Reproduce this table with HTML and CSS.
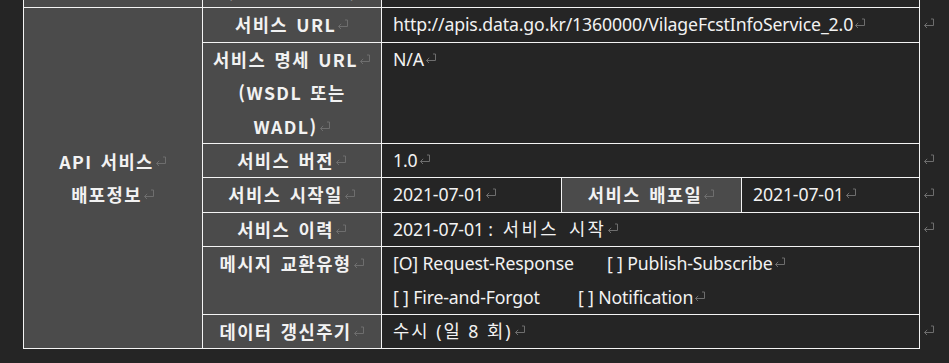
FILE: index.html
```html
<!DOCTYPE html>
<html lang="ko">
<head>
  <meta charset="UTF-8" />
  <meta name="viewport" content="width=device-width, initial-scale=1.0" />
  <title>API 서비스 배포정보</title>
  <link rel="stylesheet" href="styles.css">
</head>
<body>

  <!-- paragraph mark, reused after every paragraph -->
  <svg width="0" height="0" class="defs" aria-hidden="true">
    <symbol id="pm" viewBox="0 0 12 10">
      <path d="M8 1H10.5V7.5H1.5M4.2 4.8L1.5 7.5L4.2 10.2" fill="none" stroke="currentColor" stroke-width="1"/>
    </symbol>
  </svg>

  <!-- Document view, scrolled so the previous row is just cut off at the top -->
  <div class="sheet">
    <table class="spec">
      <colgroup>
        <col class="c-group">
        <col class="c-label">
        <col class="c-data">
        <col class="c-data">
        <col class="c-data-end">
        <col class="c-mark">
      </colgroup>

      <tr>
        <td class="label"></td>
        <td class="label">(동네예보 조회)</td>
        <td class="data" colspan="3"></td>
        <td class="mark-cell"></td>
      </tr>

      <tr>
        <td class="group" rowspan="7">API 서비스<svg class="pm"><use href="#pm"/></svg><br>배포정보<svg class="pm"><use href="#pm"/></svg></td>
        <td class="label">서비스 URL<svg class="pm"><use href="#pm"/></svg></td>
        <td class="data" colspan="3">http://apis.data.go.kr/1360000/VilageFcstInfoService_2.0<svg class="pm"><use href="#pm"/></svg></td>
        <td class="mark-cell"><svg class="pm"><use href="#pm"/></svg></td>
      </tr>

      <tr>
        <td class="label">서비스 명세 URL<svg class="pm"><use href="#pm"/></svg><br>(WSDL 또는<br>WADL)<svg class="pm"><use href="#pm"/></svg></td>
        <td class="data" colspan="3">N/A<svg class="pm"><use href="#pm"/></svg></td>
        <td class="mark-cell"></td>
      </tr>

      <tr>
        <td class="label">서비스 버전<svg class="pm"><use href="#pm"/></svg></td>
        <td class="data" colspan="3">1.0<svg class="pm"><use href="#pm"/></svg></td>
        <td class="mark-cell"><svg class="pm"><use href="#pm"/></svg></td>
      </tr>

      <tr>
        <td class="label">서비스 시작일<svg class="pm"><use href="#pm"/></svg></td>
        <td class="data">2021-07-01<svg class="pm"><use href="#pm"/></svg></td>
        <td class="label">서비스 배포일<svg class="pm"><use href="#pm"/></svg></td>
        <td class="data">2021-07-01<svg class="pm"><use href="#pm"/></svg></td>
        <td class="mark-cell"><svg class="pm"><use href="#pm"/></svg></td>
      </tr>

      <tr>
        <td class="label">서비스 이력<svg class="pm"><use href="#pm"/></svg></td>
        <td class="data" colspan="3">2021-07-01&nbsp;:<span class="ko wide"> 서비스 시작</span><svg class="pm"><use href="#pm"/></svg></td>
        <td class="mark-cell"><svg class="pm"><use href="#pm"/></svg></td>
      </tr>

      <tr>
        <td class="label">메시지 교환유형<svg class="pm"><use href="#pm"/></svg></td>
        <td class="data" colspan="3">
          <span class="opt opt-1">[O] Request-Response</span>[ ] Publish-Subscribe<svg class="pm"><use href="#pm"/></svg><br>
          <span class="opt opt-2">[ ] Fire-and-Forgot</span>[ ] Notification<svg class="pm"><use href="#pm"/></svg>
        </td>
        <td class="mark-cell"></td>
      </tr>

      <tr>
        <td class="label">데이터 갱신주기<svg class="pm"><use href="#pm"/></svg></td>
        <td class="data" colspan="3"><span class="ko">수시 (일 8 회)</span><svg class="pm"><use href="#pm"/></svg></td>
        <td class="mark-cell"><svg class="pm"><use href="#pm"/></svg></td>
      </tr>
    </table>
  </div>

</body>
</html>
```

FILE: styles.css
```css
:root {
  --page-bg: #252525;
  --label-bg: #4b4b4b;
  --rule: #f4f4f4;
  --text: #f2f2f2;
  --mark: #6e6e6e;
  --line: 33.4px;
}

* {
  box-sizing: border-box;
  margin: 0;
  padding: 0;
}

body {
  background: var(--page-bg);
  color: var(--text);
  font-family: "Noto Sans", "Noto Sans CJK KR", sans-serif;
  font-size: 17.7px;
}

.defs {
  position: absolute;
}

.sheet {
  height: 100vh;
  overflow: hidden;
}

.spec {
  margin: -27px 0 0 23px;
  border-collapse: collapse;
  table-layout: fixed;
  width: 920px;
}

.c-group { width: 179px; }
.c-label { width: 179px; }
.c-data { width: 180px; }
.c-data-end { width: 178px; }
.c-mark { width: 24px; }

.spec td {
  border: 1px solid var(--rule);
  line-height: var(--line);
  vertical-align: top;
  white-space: nowrap;
}

.group,
.label {
  background: var(--label-bg);
  text-align: center;
  font-family: "Noto Sans CJK KR", sans-serif;
  font-weight: 700;
  letter-spacing: 1.4px;
  word-spacing: 2px;
}

.group {
  vertical-align: middle !important;
}

.data {
  padding-left: 11px;
  letter-spacing: -0.15px;
}

/* hangul runs in the body text are set a little looser */
.data .ko {
  letter-spacing: 2px;
}

.data .wide {
  letter-spacing: 2.4px;
  word-spacing: 3px;
}

/* end-of-row marks sit outside the grid, no rules */
.spec td.mark-cell {
  border: none;
  background: transparent;
  padding-left: 2px;
}

.pm {
  width: 12px;
  height: 10px;
  margin-left: 1px;
  color: var(--mark);
  vertical-align: 3px;
}

.opt {
  display: inline-block;
}

.opt-1 { width: 214px; }
.opt-2 { width: 185px; }
```
